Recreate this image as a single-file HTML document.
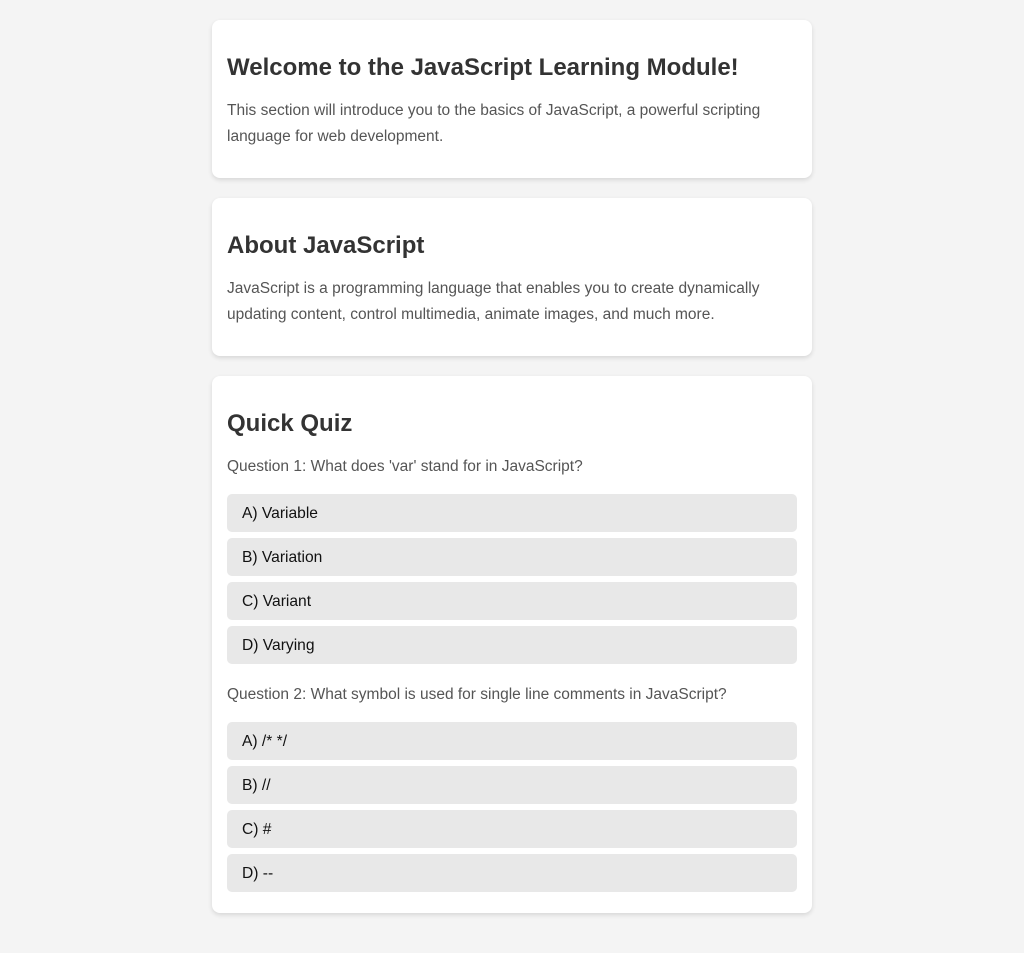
<!DOCTYPE html>
<html><head><meta charset="utf-8"><style>
html,body{margin:0;padding:0;background:#f4f4f4;}
body{font-family:"Liberation Sans",Arial,sans-serif;width:1024px;height:953px;overflow:hidden;}
.wrap{width:600px;margin:0 auto;padding-top:20px;}
.card{background:#fff;border-radius:8px;box-shadow:0 2px 5px rgba(0,0,0,0.12);padding:15px;margin-bottom:20px;}
h2{font-size:24px;line-height:28px;margin:19px 0 0;color:#333;font-weight:bold;}
p{font-size:15.5px;line-height:25.6px;color:#555;margin:16px 0 14px;}
p.q2{margin-top:18px;}
.opt{background:#e8e8e8;border-radius:5px;padding:11px 15px 9px;font-size:15.6px;line-height:18px;color:#111;margin:6px 0;}
</style></head><body><div class="wrap">
<div class="card"><h2>Welcome to the JavaScript Learning Module!</h2><p>This section will introduce you to the basics of JavaScript, a powerful scripting language for web development.</p></div>
<div class="card"><h2>About JavaScript</h2><p>JavaScript is a programming language that enables you to create dynamically updating content, control multimedia, animate images, and much more.</p></div>
<div class="card"><h2>Quick Quiz</h2>
<p>Question 1: What does 'var' stand for in JavaScript?</p>
<div class="opt">A) Variable</div><div class="opt">B) Variation</div><div class="opt">C) Variant</div><div class="opt">D) Varying</div>
<p class="q2">Question 2: What symbol is used for single line comments in JavaScript?</p>
<div class="opt">A) /* */</div><div class="opt">B) //</div><div class="opt">C) #</div><div class="opt">D) --</div>
</div>
</div></body></html>
